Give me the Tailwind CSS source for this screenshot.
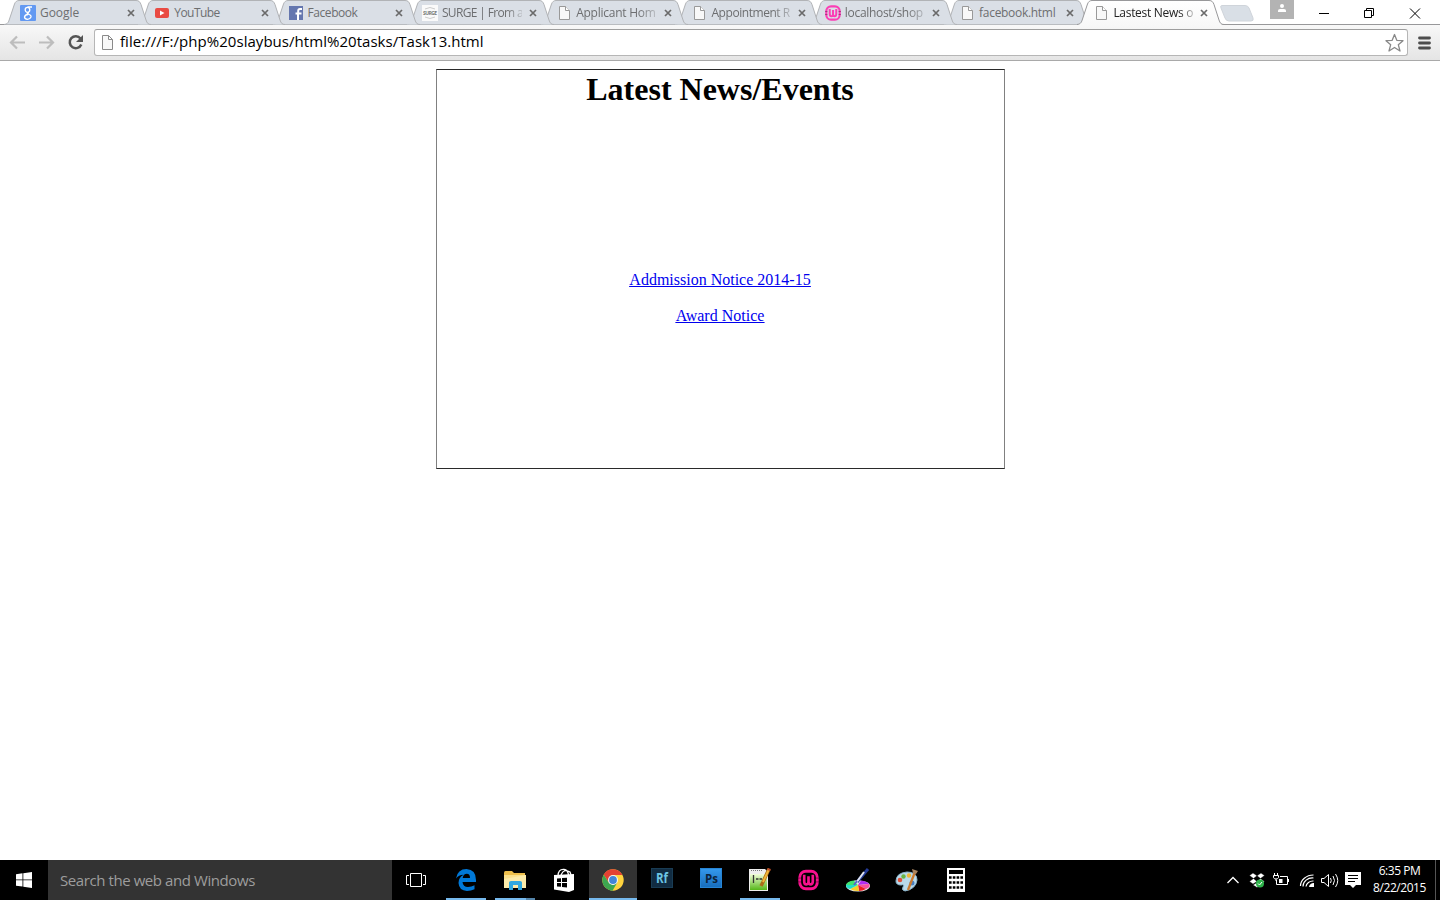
<!DOCTYPE html>
<html lang="en">
<head>
<meta charset="utf-8">
<title>Lastest News or Events</title>
<script src="https://cdn.jsdelivr.net/npm/@tailwindcss/browser@4"></script>
</head>
<body class="w-[1440px] h-[900px] overflow-hidden bg-white flex flex-col font-['Open_Sans',sans-serif]">
<svg width="0" height="0" class="absolute">
  <defs>
    <linearGradient id="act" x1="0" y1="0" x2="0" y2="1"><stop offset="0" stop-color="#fff"/><stop offset="1" stop-color="#f8f8f8"/></linearGradient>
    <symbol id="tab" viewBox="0 0 148 25"><path d="M0 24.5C4 24 4.500 22 5.500 19L10.500 4C11.500 1.500 13 .5 15 .5H132C135 .5 136 2 137 4.500L142 20C143 23 144 24.500 147 24.500Z" fill="#dadfe6"/><path d="M0 24.500C4 24 4.500 22 5.500 19L10.500 4C11.500 1.500 13 .5 15 .5H132C135 .5 136 2 137 4.500L142 20C143 23 144 24.500 147 24.500" fill="none" stroke="#b1b3b6"/></symbol>
    <symbol id="tabon" viewBox="0 0 148 25"><path d="M0 25C4 24 4.500 22 5.500 19L10.500 4C11.500 1.500 13 .5 15 .5H132C135 .5 136 2 137 4.500L142 20C143 23 144 24.500 147 25Z" fill="url(#act)"/><path d="M0 24.500C4 24 4.500 22 5.500 19L10.500 4C11.500 1.500 13 .5 15 .5H132C135 .5 136 2 137 4.500L142 20C143 23 144 24.500 147 24.500" fill="none" stroke="#98989a"/></symbol>
    <symbol id="page" viewBox="0 0 16 16"><path d="M3.500 1.500H9.500L13.500 5.500V14.500H3.500Z" fill="#f8f8f8" stroke="#999"/><path d="M9.500 1.500V5.500H13.500" fill="#fff" stroke="#999"/></symbol>
    <symbol id="x" viewBox="0 0 8 8"><path d="M1 1L7 7M7 1L1 7" stroke="#6a6a6a" stroke-width="1.700"/></symbol>
    <symbol id="wamp" viewBox="0 0 22 22"><rect x="1.800" y="1.800" width="18.400" height="18.400" rx="6.500" fill="none" stroke="currentColor" stroke-width="3"/><path d="M6.500 5.500V12.500Q6.500 15.500 8.800 15.500T11 12.500V7V12.500Q11 15.500 13.200 15.500T15.500 12.500V5.500" fill="none" stroke="currentColor" stroke-width="2.800"/><path d="M0 9H3.500M0 13H3.500M18.500 9H22M18.500 13H22" stroke="#0007" stroke-width=".9"/></symbol>
  </defs>
</svg>

<header class="h-[61px] shrink-0 flex flex-col">
  <div class="relative h-[25px] flex pl-[6px] text-[12px] leading-[25px] tracking-[-0.3px] text-[#6d6e70] after:absolute after:inset-x-0 after:bottom-0 after:h-px after:bg-[#98989a]">
    <div class="relative z-[9] w-[134.3px] shrink-0"><svg class="absolute -left-[2px] top-0" width="148" height="25"><use href="#tab"/></svg>
      <div class="relative flex items-center h-[25px] pl-[14px]"><svg width="16" height="16" viewBox="0 0 16 16"><rect width="16" height="16" rx="1" fill="#6399f2"/><g fill="none" stroke="#fff" stroke-width="1.300"><ellipse cx="7.500" cy="4.800" rx="2.300" ry="2.500"/><path d="M12 2H7.500M9 7.500Q6 8 8 9.200M8 9Q11.500 10 11 12Q10 14.300 7.500 14.300Q4.500 14 4.500 12Q5 9.700 8 9.500"/></g></svg><span class="ml-1 w-[80px] tracking-[-0.05px] whitespace-nowrap">Google</span><svg class="ml-[7px]" width="8" height="8"><use href="#x"/></svg></div></div>
    <div class="relative z-[8] w-[134.3px] shrink-0"><svg class="absolute -left-[2px] top-0" width="148" height="25"><use href="#tab"/></svg>
      <div class="relative flex items-center h-[25px] pl-[14px]"><svg width="16" height="16" viewBox="0 0 16 16"><rect x="1" y="3" width="14" height="10" rx="2" fill="#e94b43"/><path d="M6 5.500V10.500L10.500 8Z" fill="#fff"/></svg><span class="ml-1 w-[80px] tracking-[-0.55px] whitespace-nowrap">YouTube</span><svg class="ml-[7px]" width="8" height="8"><use href="#x"/></svg></div></div>
    <div class="relative z-[7] w-[134.3px] shrink-0"><svg class="absolute -left-[2px] top-0" width="148" height="25"><use href="#tab"/></svg>
      <div class="relative flex items-center h-[25px] pl-[13px]"><svg width="16" height="16" viewBox="0 0 16 16"><rect x="1" y="1" width="14" height="14" fill="#6577af"/><path d="M10 15V9M14 4H12Q10.200 4 10.200 6V9M7.500 8.500H13.500" fill="none" stroke="#fff" stroke-width="2"/></svg><span class="ml-1 w-[80px] tracking-[-0.45px] whitespace-nowrap">Facebook</span><svg class="ml-[7px]" width="8" height="8"><use href="#x"/></svg></div></div>
    <div class="relative z-[6] w-[134.3px] shrink-0"><svg class="absolute -left-[2px] top-0" width="148" height="25"><use href="#tab"/></svg>
      <div class="relative flex items-center h-[25px] pl-[13px]"><svg width="16" height="16" viewBox="0 0 16 16"><rect width="16" height="16" fill="#fafafa"/><path d="M3 4Q8 1 13 4M3 12Q8 15 13 12" fill="none" stroke="#ccc"/><text x="1" y="10" font-size="5" font-weight="700" letter-spacing="0" textLength="14" fill="#777">SURGE</text></svg><span class="ml-1 w-[80px] tracking-[-0.65px] whitespace-nowrap [mask-image:linear-gradient(90deg,#000_64px,transparent_86px)]">SURGE | From a</span><svg class="ml-[7px]" width="8" height="8"><use href="#x"/></svg></div></div>
    <div class="relative z-[5] w-[134.3px] shrink-0"><svg class="absolute -left-[2px] top-0" width="148" height="25"><use href="#tab"/></svg>
      <div class="relative flex items-center h-[25px] pl-[13px]"><svg width="16" height="16"><use href="#page"/></svg><span class="ml-1 w-[80px] tracking-[-0.25px] whitespace-nowrap [mask-image:linear-gradient(90deg,#000_62px,transparent_88px)]">Applicant Hom</span><svg class="ml-[8px]" width="8" height="8"><use href="#x"/></svg></div></div>
    <div class="relative z-[4] w-[134.3px] shrink-0"><svg class="absolute -left-[2px] top-0" width="148" height="25"><use href="#tab"/></svg>
      <div class="relative flex items-center h-[25px] pl-[14px]"><svg width="16" height="16"><use href="#page"/></svg><span class="ml-1 w-[80px] tracking-[-0.45px] whitespace-nowrap [mask-image:linear-gradient(90deg,#000_62px,transparent_88px)]">Appointment R</span><svg class="ml-[7px]" width="8" height="8"><use href="#x"/></svg></div></div>
    <div class="relative z-[3] w-[134.3px] shrink-0"><svg class="absolute -left-[2px] top-0" width="148" height="25"><use href="#tab"/></svg>
      <div class="relative flex items-center h-[25px] pl-[13px]"><svg width="16" height="16" class="text-[#fb3fb5]"><use href="#wamp"/></svg><span class="ml-1 w-[80px] tracking-[-0.3px] whitespace-nowrap [mask-image:linear-gradient(90deg,#000_62px,transparent_88px)]">localhost/shop</span><svg class="ml-[7px]" width="8" height="8"><use href="#x"/></svg></div></div>
    <div class="relative z-[2] w-[134.3px] shrink-0"><svg class="absolute -left-[2px] top-0" width="148" height="25"><use href="#tab"/></svg>
      <div class="relative flex items-center h-[25px] pl-[13px]"><svg width="16" height="16"><use href="#page"/></svg><span class="ml-1 w-[80px] whitespace-nowrap">facebook.html</span><svg class="ml-[7px]" width="8" height="8"><use href="#x"/></svg></div></div>
    <div class="relative z-[10] w-[134.3px] shrink-0 text-[#222]"><svg class="absolute -left-[3px] top-0" width="148" height="25"><use href="#tabon"/></svg>
      <div class="relative flex items-center h-[25px] pl-[13px]"><svg width="16" height="16"><use href="#page"/></svg><span class="ml-1 w-[80px] tracking-[-0.3px] whitespace-nowrap [mask-image:linear-gradient(90deg,#000_66px,transparent_86px)]">Lastest News o</span><svg class="ml-[7px]" width="8" height="8"><use href="#x"/></svg></div></div>
    <svg class="ml-[5px] mt-[5px] shrink-0" width="34" height="17" viewBox="0 0 34 17"><path d="M2 .5H25Q28 .5 29 3L33 13Q34 16 31 16H9Q6 16 5 13L1 3Q0 .5 2 .5Z" fill="#d9dfe6" stroke="#cfd4da"/></svg>
    <svg class="ml-auto mr-[20px] shrink-0" width="24" height="19" viewBox="0 0 24 19"><rect width="24" height="19" fill="#b3b3b3"/><circle cx="12" cy="6" r="2" fill="#fff"/><path d="M8 12V10.500Q8 9 10 9H14Q16 9 16 10.500V12Z" fill="#fff"/></svg>
    <svg class="mr-[19px] shrink-0" width="107" height="25" viewBox="0 0 107 25" fill="none" stroke="#000"><path d="M5 13.500H15M50.500 10.500H57.500V17.500H50.500ZM52.500 10V8.500H59.500V15.500H58M96 8.500L106 18.500M106 8.500L96 18.500"/></svg>
  </div>
  <div class="h-[36px] flex items-center bg-linear-to-b from-[#f8f8f8] to-[#e5e5e5] border-b border-[#a9a9a9]">
    <svg class="shrink-0" width="94" height="34" viewBox="0 0 94 34" fill="none"><g stroke="#bdbdbd" stroke-width="2.200"><path d="M25 16.500H12M17 10.500L11 16.500L17 22.500M39 16.500H52M47 10.500L53 16.500L47 22.500"/></g><path d="M80.500 12.500A6 6 0 1 0 81.300 18.500" stroke="#555" stroke-width="2.500"/><path d="M76 16H83V9Z" fill="#555"/></svg>
    <div class="w-[1314px] h-[27px] flex items-center border border-[#b6b6b6] border-t-[#9e9e9e] rounded-[3px] bg-white pl-[5px] pr-[3px]">
      <svg width="16" height="18" viewBox="0 0 16 18"><path d="M2.500 1.500H8.500L12.500 5.500V15.500H2.500ZM8.500 1.500V5.500H12.500" fill="#f8f8f8" stroke="#8a8a8a"/></svg>
      <span class="ml-[4px] pb-[2px] text-[15px] leading-[23px] tracking-[0.04px] whitespace-nowrap text-black">file:///F:/php%20slaybus/html%20tasks/Task13.html</span>
      <svg class="ml-auto" width="20" height="20" viewBox="0 0 20 20"><path d="M10.500 1.500L12.800 7.300L19 7.700L14.300 11.700L16 18L10.500 14.500L5 18L6.700 11.700L2 7.700L8.200 7.300Z" fill="#fff" stroke="#888" stroke-width="1.300" stroke-linejoin="round"/></svg>
    </div>
    <svg class="ml-[9px]" width="14" height="14" viewBox="0 0 14 14"><path d="M2.500 2H12.500M2.500 7H12.500M2.500 12H12.500" stroke="#4d4d4d" stroke-width="2.800" stroke-linecap="round"/></svg>
  </div>
</header>

<main class="grow pt-2 font-['Liberation_Serif',serif] text-black">
  <section class="w-[569px] h-[400px] ml-[436px] border border-y-[#2a2a2a] border-x-[#808080] flex flex-col items-center pr-px">
    <h1 class="pt-px text-[32px] leading-[37px] font-bold whitespace-nowrap">Latest News/Events</h1>
    <div class="mt-[163px] flex flex-col items-center gap-[18px] text-[16px] leading-[18px] text-[#0000ee] underline whitespace-nowrap">
      <a href="#">Addmission Notice 2014-15</a>
      <a href="#">Award Notice</a>
    </div>
  </section>
</main>

<footer class="h-[40px] shrink-0 bg-black flex text-white">
  <div class="w-[48px] flex items-center justify-center"><svg width="16" height="16" viewBox="0 0 16 16" fill="#fff"><path d="M0 2.200L6.500 1.300V7.500H0ZM7.300 1.200L16 0V7.500H7.300ZM0 8.300H6.500V14.600L0 13.700ZM7.300 8.300H16V16L7.300 14.700Z"/></svg></div>
  <div class="w-[344px] bg-[#333] pl-3 text-[15px] leading-[41px] tracking-[-0.42px] text-[#9d9d9d] whitespace-nowrap"><span>Search the web and Windows</span></div>
  <div class="w-[49px] flex items-center justify-center pr-px"><svg width="20" height="14" viewBox="0 0 20 14" fill="none" stroke="#fff"><path d="M4.500 .5H15.500V13.500H4.500ZM3 2.500H.5V11.500H3M17 2.500H19.500V11.500H17"/></svg></div>
  <div class="w-[49px] flex flex-col items-center"><svg class="mt-[9px]" width="20" height="22" viewBox="0 0 20 22"><path d="M0 9.500Q1.500 0 10.500 0Q20 .5 20 11V13H6.500Q7 18 12 18Q15.500 18 18.500 16.200V20.300Q15 22 11 22Q3 21.500 2.500 14Q2.500 8.500 7.500 5.800Q2.500 6 0 9.500ZM6.700 9H14Q14 4.800 10.800 4.800Q7.500 4.800 6.700 9Z" fill="#0078d7" fill-rule="evenodd"/></svg><i class="mt-auto h-[2px] w-[40px] bg-[#76b9ed]"></i></div>
  <div class="w-[49px] flex flex-col items-center"><svg class="mt-[10px]" width="22" height="20" viewBox="0 0 22 20"><path d="M0 3Q0 1 1.500 1H8L10 3H21V18H0Z" fill="#eebf4b"/><path d="M0 5H22V18H0Z" fill="#fbe08a"/><path d="M0 9L22 5V18H0Z" fill="#fcebaa"/><path d="M5 20V12.500Q5 11 7 11H16Q18 11 18 12.500V20H14V15H9V20Z" fill="#30a8e0"/></svg><i class="mt-auto h-[2px] w-[40px] bg-linear-to-r from-[#76b9ed] from-[77%] to-[#5485aa] to-[77%]"></i></div>
  <div class="w-[49px] flex justify-center"><svg class="mt-[8px]" width="22" height="24" viewBox="0 0 22 24"><path d="M1 7L21 6V22L16 24L1 21.500Z" fill="#fff"/><path d="M5 8Q5 1 11 1.500Q15 2 15.500 7M8 7Q11 0 17 4L18 7" fill="none" stroke="#fff" stroke-width="1.300"/><path d="M4 10.500L8 10.200V14H4ZM9 10.100L14 9.700V14H9ZM4 15H8V18.800L4 18.400ZM9 15H14V19.600L9 19Z" fill="#000"/></svg></div>
  <div class="w-[49px] bg-[#333] bg-clip-content flex flex-col items-center pl-px"><svg class="mt-[9px]" width="22" height="22" viewBox="0 0 22 22"><circle cx="11" cy="11" r="10.700" fill="#ffd33e"/><path d="M1.700 5.700A10.700 10.700 0 0 1 20.400 6H11L6.700 13.500Z" fill="#e34133"/><path d="M1.700 5.700A10.700 10.700 0 0 0 10.500 21.700L15.300 13.500L11 16L6.700 13.500Z" fill="#3da750"/><circle cx="11" cy="11" r="5" fill="#f5f5f5"/><circle cx="11" cy="11" r="3.900" fill="#4285d7"/></svg><i class="mt-auto h-[2px] w-full bg-[#76b9ed]"></i></div>
  <div class="w-[49px] flex justify-center"><svg class="mt-[8px]" width="22" height="20" viewBox="0 0 22 20"><rect x=".5" y=".5" width="21" height="19" fill="#112c42" stroke="#193c54"/><text x="5" y="15" font-size="14" font-weight="700" textLength="12" lengthAdjust="spacingAndGlyphs" fill="#6cc4e3">Rf</text></svg></div>
  <div class="w-[49px] flex justify-center"><svg class="mt-[8px]" width="22" height="20" viewBox="0 0 22 20"><defs><linearGradient id="ps" x2="0" y2="1"><stop stop-color="#3599ed"/><stop offset="1" stop-color="#176dbd"/></linearGradient></defs><rect x=".5" y=".5" width="21" height="19" fill="url(#ps)" stroke="#2785d5"/><text x="5" y="15" font-size="13" font-weight="700" textLength="13" lengthAdjust="spacingAndGlyphs" fill="#0c233b">Ps</text></svg></div>
  <div class="w-[49px] flex flex-col items-center"><svg class="mt-[8px]" width="22" height="24" viewBox="0 0 22 24"><defs><linearGradient id="np" x2="0" y2="1"><stop stop-color="#f2ffda"/><stop offset="1" stop-color="#55b719"/></linearGradient></defs><path d="M0 1H16L19 4V23H0Z" fill="#eee"/><path d="M1 6H18V22H1Z" fill="url(#np)"/><path d="M4.500 7V15M7 11H9.500M10.500 11H13" stroke="#333" stroke-width="1.300"/><path d="M2 2.500H14" stroke="#777" stroke-dasharray="1 1"/><path d="M20 1L14 14L12 18" stroke="#a96e19" stroke-width="3.500"/><path d="M20 1L14 14" stroke="#f1b439" stroke-width="2"/><path d="M18.500 1L21.500 2" stroke="#bd4b2c" stroke-width="2"/></svg><i class="mt-auto h-[2px] w-[40px] bg-[#76b9ed]"></i></div>
  <div class="w-[49px] flex justify-center"><svg class="mt-[9px] text-[#f8118d]" width="21" height="22"><use href="#wamp"/></svg></div>
  <div class="w-[49px] flex justify-center"><svg class="mt-[8px]" width="24" height="24" viewBox="0 0 24 24"><ellipse cx="12" cy="18" rx="12" ry="5.500" fill="#eee"/><path d="M12 17L0 17Q1 13 8 12.500Z" fill="#40e26f"/><path d="M12 17L8 12.500H15Z" fill="#d8e8ec"/><path d="M12 17L15 12.500Q21 13 23 16Z" fill="#b12df1"/><path d="M12 17L23 16Q25 19 20 21Z" fill="#f5509f"/><path d="M12 17L20 21Q17 23 13 23Z" fill="#ed1c24"/><path d="M12 17L13 23Q8 23.500 4 21Z" fill="#f7ce28"/><path d="M12 17L4 21Q0 20 0 17Z" fill="#20dfc5"/><path d="M22 1L11 14" stroke="#233a96" stroke-width="3"/><path d="M18 4L10 15" stroke="#e1e5f1" stroke-width="2"/><path d="M11 13L8 17" stroke="#5665ca" stroke-width="2"/></svg></div>
  <div class="w-[49px] flex justify-center"><svg class="mt-[8px]" width="24" height="24" viewBox="0 0 24 24"><path d="M1 13Q1 5 12 4Q22 4 22 12Q21 21 10 23Q6 22 8 19Q10 16 6 17Q1 17 1 13Z" fill="#b9d9e9" stroke="#8bb5cc"/><circle cx="5" cy="12" r="2.300" fill="#df5038"/><circle cx="8.500" cy="8.500" r="2.200" fill="#68b444"/><circle cx="14" cy="7.500" r="2.200" fill="#f0b537"/><circle cx="17" cy="15" r="2.500" fill="#487fc0"/><path d="M20 4L13 22" stroke="#cb7b30" stroke-width="2.300"/><path d="M17 1L23 3L21 6L18 5Z" fill="#a9845f"/></svg></div>
  <div class="w-[49px] flex justify-center"><svg class="mt-[8px]" width="18" height="24" viewBox="0 0 18 24"><path d="M0 0H18V24H0Z" fill="#fff"/><path d="M2 2H16V6H2Z"/><path d="M2 9.500H16M2 14.500H16M2 19.500H16" stroke="#000" stroke-width="2.500" stroke-dasharray="2.600 1.200"/></svg></div>
  <svg class="ml-auto shrink-0" width="140" height="40" viewBox="0 0 140 40" fill="none" stroke="#fff">
    <path d="M5.500 23L11 17.500L16.500 23" stroke-width="1.300"/>
    <path d="M31 13L35 15.800L31.500 18.500L27.500 15.500ZM39 13L42.500 15.500L38.500 18.500L35 15.800ZM31.500 18.500L35 21.500L31 24L27.500 21.500ZM38.500 18.500L42.500 21.500L39 24L35 21.500ZM31 25L35 22.500L39 25L35 27.500Z" fill="#fff" stroke="#000" stroke-width=".4"/><circle cx="38" cy="23.500" r="4" fill="#2db34a" stroke="none"/><path d="M36 23.500L37.500 25L40 22"/>
    <path d="M54.500 20V24.500H65.500V16.500H58M66.500 19V22M52.500 15.500V13M55.500 15.500V13M51.500 15.500H56.500V17.500Q56 19 54 19T51.500 17.500ZM54 19V21"/><path d="M57 19H60.500V23H57Z" fill="#fff" stroke="none"/>
    <path d="M78.500 26A13 11 0 0 1 91.500 15M81 26.500A9.500 8.500 0 0 1 91.500 18M84 26.500A7 6 0 0 1 91.500 21" stroke-width="1.200"/><path d="M87 27A4.500 4.500 0 0 1 92 23V27Z" fill="#fff" stroke="none"/>
    <path d="M99.500 18.500H102L106.500 14.500V26.500L102 22.500H99.500ZM108.500 18Q110 20.500 108.500 23M111 16Q114 20.500 111 25M113.500 14Q118 20.500 113.500 27"/>
    <path d="M123 12H139V25H134L131 28L128 25H123Z" fill="#fff" stroke="none"/><path d="M126 15.500H136M126 18.500H136M126 21.500H133" stroke="#000"/>
  </svg>
  <div class="w-[73px] shrink-0 pl-[2px] pt-[2px] text-center text-[12px] leading-[17px] tracking-[-0.45px] whitespace-nowrap"><p>6:35 PM</p><p>8/22/2015</p></div>
  <div class="w-[5px] shrink-0 border-l border-[#555]"></div>
</footer>
</body>
</html>
